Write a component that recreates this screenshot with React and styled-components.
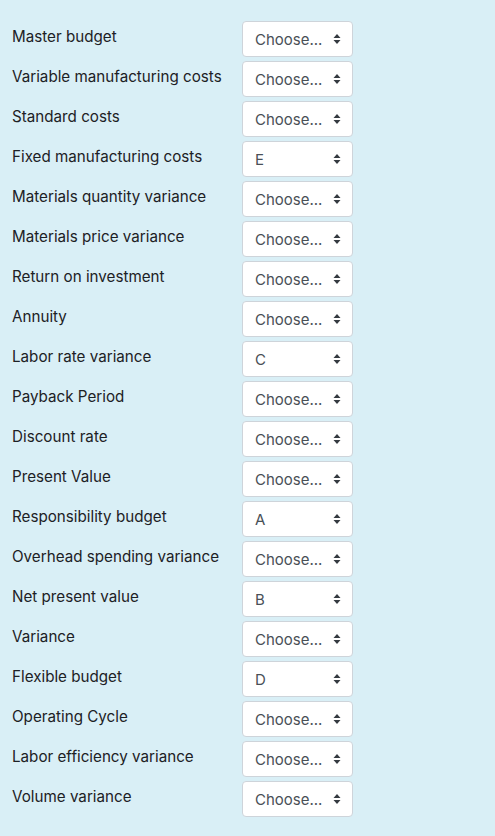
import { createGlobalStyle, styled } from "styled-components";

const GlobalStyle = createGlobalStyle`
    body {
        margin: 0;
        background-color: #d9eff6;
        font-family: Inter, "Liberation Sans", Arial, sans-serif;
    }
`

const Page = styled.div`
    padding: 19px 12px 16px 12px;
    min-height: 836px;
    box-sizing: border-box;
    background-color: #d9eff6;
`
const Row = styled.div`
    display: flex;
    align-items: flex-start;
`
const Label = styled.div`
    width: 230px;
    flex-shrink: 0;
    font-size: 15.2px;
    line-height: 22.5px;
    padding-top: 7px;
    color: #1d2125;
`
const SelectWrap = styled.div`
    position: relative;
    margin: 2px 0;
    width: 111px;
    height: 36px;
`
const Select = styled.select`
    appearance: none;
    -webkit-appearance: none;
    width: 100%;
    height: 100%;
    box-sizing: border-box;
    margin: 0;
    padding: 0 26px 0 12px;
    font-family: Inter, "Liberation Sans", Arial, sans-serif;
    font-size: 15px;
    color: #495057;
    background-color: #fff;
    border: 1px solid #ced4da;
    border-radius: 4px;
    outline: none;
`
const Arrow = styled.svg`
    position: absolute;
    right: 12px;
    top: 50%;
    transform: translateY(-50%);
    pointer-events: none;
`

const rows = [
    ["Master budget", ""],
    ["Variable manufacturing costs", ""],
    ["Standard costs", ""],
    ["Fixed manufacturing costs", "E"],
    ["Materials quantity variance", ""],
    ["Materials price variance", ""],
    ["Return on investment", ""],
    ["Annuity", ""],
    ["Labor rate variance", "C"],
    ["Payback Period", ""],
    ["Discount rate", ""],
    ["Present Value", ""],
    ["Responsibility budget", "A"],
    ["Overhead spending variance", ""],
    ["Net present value", "B"],
    ["Variance", ""],
    ["Flexible budget", "D"],
    ["Operating Cycle", ""],
    ["Labor efficiency variance", ""],
    ["Volume variance", ""],
]

const letters = ["A", "B", "C", "D", "E"]

function App() {
    return <>
        <GlobalStyle />
        <Page>
            {
                rows.map(([label, value]) => <Row key={label}>
                    <Label>{label}</Label>
                    <SelectWrap>
                        <Select defaultValue={value}>
                            <option value="">Choose...</option>
                            {letters.map(l => <option key={l} value={l}>{l}</option>)}
                        </Select>
                        <Arrow width="8" height="11" viewBox="0 0 8 11">
                            <path d="M4 0.5 L7.5 4.5 H0.5 Z M4 10.5 L0.5 6.5 H7.5 Z" fill="#343a40" />
                        </Arrow>
                    </SelectWrap>
                </Row>)
            }
        </Page>
    </>
}

export default App;
